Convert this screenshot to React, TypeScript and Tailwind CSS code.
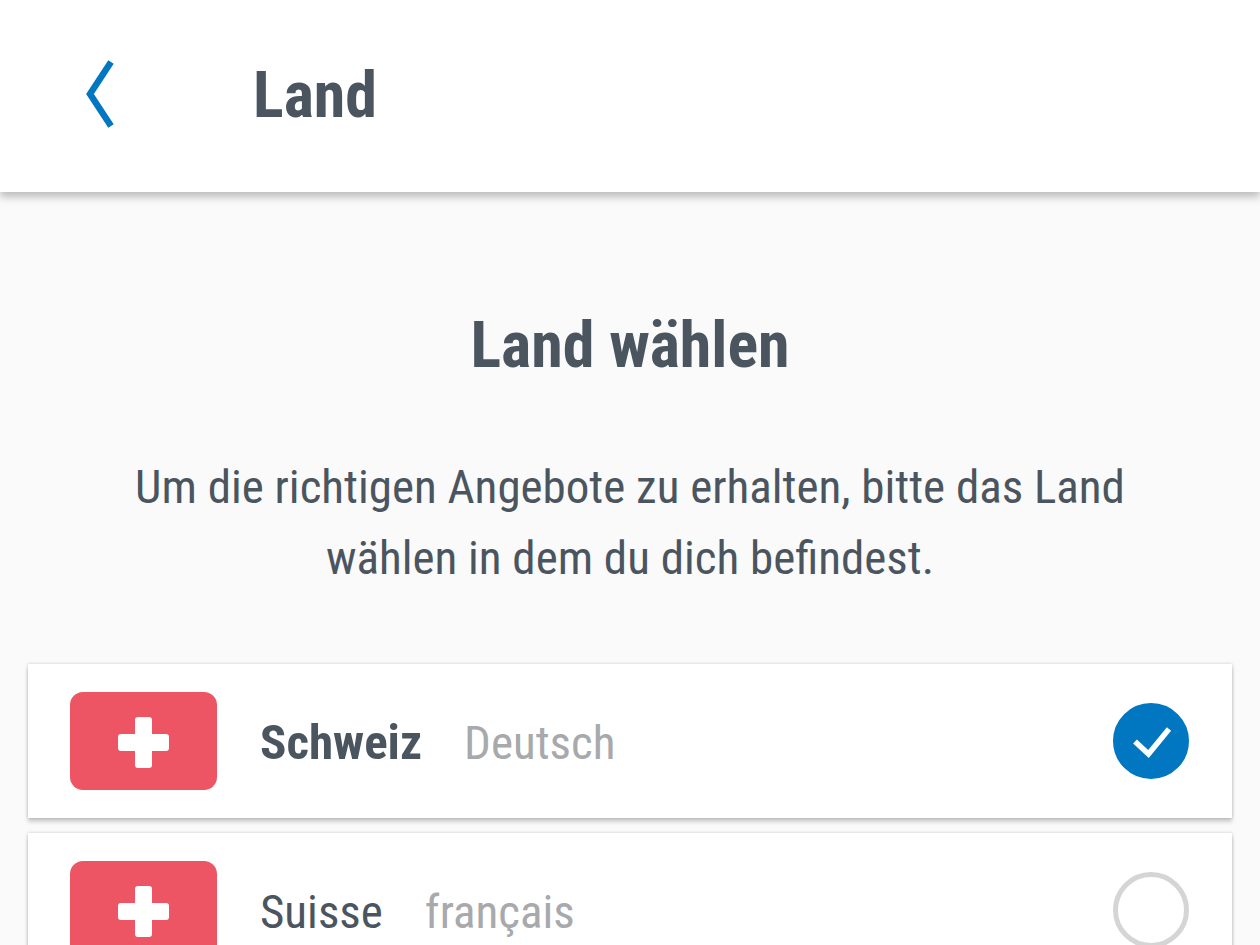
import { useState } from "react";

interface Country {
  id: string;
  name: string;
  language: string;
}

const countries: Country[] = [
  { id: "ch-de", name: "Schweiz", language: "Deutsch" },
  { id: "ch-fr", name: "Suisse", language: "français" },
];

function SwissFlag() {
  return (
    <svg viewBox="0 0 147 98" className="h-[98px] w-[147px] shrink-0" aria-hidden="true">
      <rect width="147" height="98" rx="13" fill="#ed5565" />
      <rect x="65" y="25" width="17" height="51" rx="3" fill="#fff" />
      <rect x="48" y="42" width="51" height="17" rx="3" fill="#fff" />
    </svg>
  );
}

interface CountryRowProps {
  country: Country;
  selected: boolean;
  onSelect: () => void;
}

function CountryRow({ country, selected, onSelect }: CountryRowProps) {
  return (
    <label
      htmlFor={country.id}
      className="flex cursor-pointer items-center bg-white py-7 pr-[43px] pl-[42px] shadow-[0_4px_4px_rgba(0,0,0,0.18),0_0_3px_rgba(0,0,0,0.2)]"
    >
      <SwissFlag />
      <span className="ml-[43px] flex items-baseline gap-[42px] pt-1 leading-[72px]">
        <span className={selected ? "text-[49px] font-bold" : "text-[47px]"}>{country.name}</span>
        <span className="text-[47px] text-[#a7a9ac]">{country.language}</span>
      </span>

      {/* Radio */}
      <span className="relative ml-auto h-[76px] w-[76px] shrink-0">
        <input
          type="radio"
          id={country.id}
          name="country"
          checked={selected}
          onChange={onSelect}
          className="block h-full w-full cursor-pointer appearance-none rounded-full border-[5px] border-[#d5d5d5] checked:border-[#0077c0] checked:bg-[#0077c0]"
        />
        {selected && (
          <svg viewBox="0 0 76 76" className="pointer-events-none absolute inset-0" aria-hidden="true">
            <path d="M22 38.5 L35.5 51 L56 26" fill="none" stroke="#fff" strokeWidth="5.5" />
          </svg>
        )}
      </span>
    </label>
  );
}

export default function App() {
  const [selectedId, setSelectedId] = useState("ch-de");

  return (
    <div className="h-screen overflow-hidden bg-[#fafafa] font-['Roboto_Condensed',Roboto,sans-serif] text-[#4b555f]">
      {/* Top bar */}
      <header className="flex h-48 items-center bg-white pb-1 pl-[84px] shadow-[0_5px_8px_rgba(0,0,0,0.25)]">
        <button type="button" aria-label="Zurück" className="cursor-pointer">
          <svg viewBox="0 0 32 68" className="h-[68px] w-8" aria-hidden="true">
            <path d="M27 2 L6 34 L27 66" fill="none" stroke="#0077c0" strokeWidth="6.5" />
          </svg>
        </button>
        <h1 className="ml-[137px] pt-1 text-[64px] leading-[80px] font-bold">Land</h1>
      </header>

      <main className="px-7 pt-[114px]">
        <h2 className="text-center text-[64px] leading-[80px] font-bold">Land wählen</h2>
        <p className="mx-auto mt-[65px] max-w-[1060px] text-center text-[47px] leading-[71px]">
          Um die richtigen Angebote zu erhalten, bitte das Land wählen in dem du dich befindest.
        </p>

        <div className="mt-[71px] flex flex-col gap-[15px]">
          {countries.map((country) => (
            <CountryRow
              key={country.id}
              country={country}
              selected={country.id === selectedId}
              onSelect={() => setSelectedId(country.id)}
            />
          ))}
        </div>
      </main>
    </div>
  );
}
